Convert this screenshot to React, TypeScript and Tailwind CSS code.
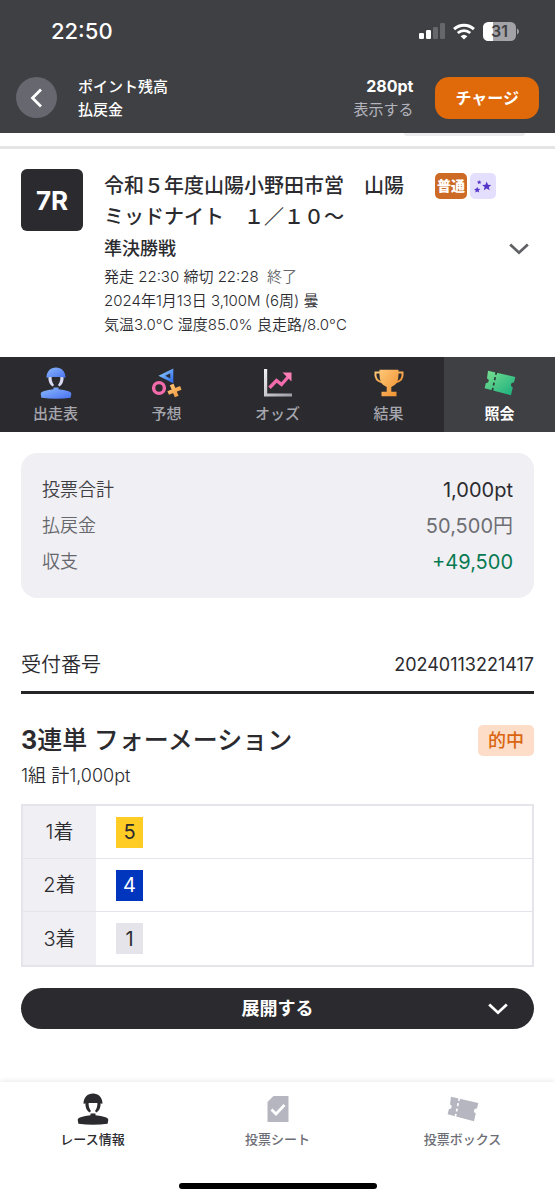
import type { ReactNode } from "react";

function BackIcon() {
  return (
    <svg width="20" height="20" viewBox="0 0 20 20" fill="none" aria-hidden="true">
      <path d="M14 1.500 5.500 10 14 18.500" stroke="#fff" strokeWidth="2.800" />
    </svg>
  );
}

function DownIcon({ color }: { color: string }) {
  return (
    <svg width="20" height="12" viewBox="0 0 20 12" fill="none" aria-hidden="true">
      <path d="M1.200 1.500 10 9.700 18.800 1.500" stroke={color} strokeWidth="2.800" />
    </svg>
  );
}

function StatusIcons() {
  return (
    <div className="flex items-center gap-2">
      <svg width="26" height="17" viewBox="0 0 26 17" aria-hidden="true">
        <rect x="0" y="10" width="5" height="6" rx="1.2" fill="#fff" />
        <rect x="7" y="7" width="5" height="9" rx="1.2" fill="#fff" />
        <rect x="14" y="4" width="5" height="12" rx="1.2" fill="#66676b" />
        <rect x="21" y="0" width="5" height="16" rx="1.2" fill="#66676b" />
      </svg>
      <svg width="22" height="17" viewBox="0 0 22 17" fill="none" stroke="#fff" aria-hidden="true">
        <path d="M1.100 6.200C6.600 .9 15.400 .9 20.900 6.200" strokeWidth="3" />
        <path d="M4.800 10C8.300 6.700 13.700 6.700 17.200 10" strokeWidth="2.800" />
        <path d="M11 16.600 7.600 13.200Q11 10.200 14.400 13.200Z" fill="#fff" stroke="none" />
      </svg>
      <svg width="36" height="19" viewBox="0 0 36 19" aria-hidden="true">
        <rect width="33" height="19" rx="5.5" fill="#a3a3a7" />
        <path d="M5.500 0H10V19H5.500A5.500 5.500 0 0 1 0 13.500V5.500A5.500 5.500 0 0 1 5.500 0Z" fill="#fff" />
        <path d="M34 6.500Q36 7.500 36 9.500T34 12.500Z" fill="#a3a3a7" />
        <text x="16.5" y="15" textAnchor="middle" fill="#3f4043" fontSize="16" fontWeight="600" fontFamily="Inter, sans-serif">
          31
        </text>
      </svg>
    </div>
  );
}

function RiderIcon({ fill, strap }: { fill: string; strap: string }) {
  return (
    <svg width="32" height="32" viewBox="0 0 32 32" aria-hidden="true">
      <defs>
        <linearGradient id="riderBlue" x1="0" y1="0" x2="1" y2="1">
          <stop offset="0" stopColor="#8bb9ff" />
          <stop offset="1" stopColor="#4a72ef" />
        </linearGradient>
      </defs>
      <path d="M8.400 9.500H11.600Q11.400 15 14 18L12.600 19.500Q8 16.500 8.400 9.500ZM23.600 9.500H20.400Q20.600 15 18 18L19.400 19.500Q24 16.500 23.600 9.500Z" fill={strap} />
      <path d="M6.500 10.800C6.500 4.500 10.500 .5 16 .5S25.500 4.500 25.500 10.800Q24 10.800 21.500 10H10.500Q8 10.800 6.500 10.800Z" fill={fill} />
      <path d="M13.500 20.500H18.500V22.300Q24 22.600 28.500 24.300Q31.500 25.300 31.300 27L30.600 30.800Q16 32.600 1.400 30.800L.7 27Q.5 25.300 3.500 24.300Q8 22.600 13.500 22.300Z" fill={fill} />
    </svg>
  );
}

function PredictionIcon() {
  return (
    <svg width="32" height="32" viewBox="0 0 32 32" fill="none" aria-hidden="true">
      <defs>
        <linearGradient id="triBlue" x1="0" y1="0" x2="1" y2="1">
          <stop offset="0" stopColor="#86c5ff" />
          <stop offset="1" stopColor="#3472f0" />
        </linearGradient>
        <linearGradient id="crossOrange" x1="0" y1="0" x2="1" y2="1">
          <stop offset="0" stopColor="#ffc97a" />
          <stop offset="1" stopColor="#f0963c" />
        </linearGradient>
      </defs>
      <path d="M10.800 8.800 20.800 4V13.800Z" stroke="url(#triBlue)" strokeWidth="3" />
      <circle cx="8" cy="21" r="5.400" stroke="#f26bab" strokeWidth="3.400" />
      <path d="M20.700 17.500 25.700 29.500M17.200 26 29.800 20.800" stroke="url(#crossOrange)" strokeWidth="4" />
    </svg>
  );
}

function OddsIcon() {
  return (
    <svg width="32" height="32" viewBox="0 0 32 32" fill="none" aria-hidden="true">
      <defs>
        <linearGradient id="axisGrey" x1="0" y1="0" x2="1" y2="1">
          <stop offset="0" stopColor="#f3f3f6" />
          <stop offset="1" stopColor="#9b9ba4" />
        </linearGradient>
      </defs>
      <path d="M2 2H5.200V26.500H30V29.500H2Z" fill="url(#axisGrey)" />
      <path d="M7.500 20.800 14.500 13.500 19.500 17.500 27 9" stroke="#f26bab" strokeWidth="3.400" />
      <path d="M20.500 5.500H29.500V14.500Z" fill="#fb7fb6" />
    </svg>
  );
}

function TrophyIcon() {
  return (
    <svg width="32" height="32" viewBox="0 0 32 32" aria-hidden="true">
      <defs>
        <linearGradient id="cupGold" x1="0" y1="0" x2="1" y2="1">
          <stop offset="0" stopColor="#ffc777" />
          <stop offset="1" stopColor="#ef8f2e" />
        </linearGradient>
      </defs>
      <path d="M7 5.500H2.500Q1.300 13.800 9.800 15.500M25 5.500H29.500Q30.700 13.800 22.200 15.500" fill="none" stroke="url(#cupGold)" strokeWidth="2" />
      <path d="M6.500 2.800H25.500V8Q25.500 17.500 18.300 20V24.800H23.500V29.200H8.500V24.800H13.700V20Q6.500 17.500 6.500 8Z" fill="url(#cupGold)" />
    </svg>
  );
}

function TicketIcon({ fill, line }: { fill: string; line: string }) {
  return (
    <svg width="32" height="32" viewBox="0 0 32 32" aria-hidden="true">
      <defs>
        <linearGradient id="ticketGreen" x1="0" y1="0" x2="1" y2="1">
          <stop offset="0" stopColor="#7be092" />
          <stop offset="1" stopColor="#17ad7c" />
        </linearGradient>
      </defs>
      <path d="M4 3.800 31.300 10 30 15.600A2.200 2.200 0 0 0 28.800 20.300L27 28.300 .6 21.300 1.900 15.900A2.200 2.200 0 0 0 3 11.500Z" fill={fill} />
      <path d="M12.400 4.800 8.200 24.500" stroke={line} strokeWidth="1.700" strokeDasharray="3 2.500" />
    </svg>
  );
}

function SheetIcon() {
  return (
    <svg width="32" height="32" viewBox="0 0 32 32" aria-hidden="true">
      <path d="M11.500 3H26.500V29H5.500V9Z" fill="#b5b6c0" />
      <path d="M9.500 16.500 14 21 22.500 12" fill="none" stroke="#fff" strokeWidth="2.800" />
    </svg>
  );
}

function StarsIcon() {
  const star = "M0-4.200 1.200-1.400 4.200-1.200 1.900.8 2.700 3.700 0 2.100-2.700 3.700-1.900.8-4.200-1.200-1.200-1.400Z";
  return (
    <svg width="26" height="26" viewBox="0 0 26 26" fill="#5535c9" aria-hidden="true">
      <path d={star} transform="translate(16.700 13.200) scale(1.100)" />
      <path d={star} transform="translate(7.200 16.800) scale(.75)" />
      <path d={star} transform="translate(9.200 9.200) scale(.55)" />
    </svg>
  );
}

const tabs: { label: string; icon: ReactNode }[] = [
  { label: "出走表", icon: <RiderIcon fill="url(#riderBlue)" strap="#d9daf2" /> },
  { label: "予想", icon: <PredictionIcon /> },
  { label: "オッズ", icon: <OddsIcon /> },
  { label: "結果", icon: <TrophyIcon /> },
  { label: "照会", icon: <TicketIcon fill="url(#ticketGreen)" line="#2d3a35" /> },
];

const summary = [
  { label: "投票合計", value: "1,000pt", labelColor: "text-[#3f4043]", valueColor: "text-[#2b2b2f]" },
  { label: "払戻金", value: "50,500円", labelColor: "text-[#66676c]", valueColor: "text-[#6d6e73]" },
  { label: "収支", value: "+49,500", labelColor: "text-[#66676c]", valueColor: "text-[#087a52]" },
];

const places = [
  { place: "1着", car: "5", chip: "bg-[#ffcc26] text-[#2b2b2f]" },
  { place: "2着", car: "4", chip: "bg-[#0035bd] text-white" },
  { place: "3着", car: "1", chip: "bg-[#e4e4ea] text-[#2b2b2f]" },
];

const navItems: { label: string; icon: ReactNode; color: string }[] = [
  { label: "レース情報", icon: <RiderIcon fill="#2b2b2f" strap="#2b2b2f" />, color: "text-[#2b2b2f]" },
  { label: "投票シート", icon: <SheetIcon />, color: "text-[#6d6e75]" },
  { label: "投票ボックス", icon: <TicketIcon fill="#b5b6c0" line="#fff" />, color: "text-[#6d6e75]" },
];

export default function App() {
  return (
    <div className="flex min-h-screen flex-col bg-white font-['Inter','Noto_Sans_CJK_JP',sans-serif] text-[#2b2b2f]">
      <header className="bg-[#3f4043] text-white">
        <div className="flex h-[62px] items-center justify-between pr-9 pl-[51px]">
          <span className="text-[22px] leading-7 font-medium">22:50</span>
          <StatusIcons />
        </div>
        <div className="flex h-[71px] items-center px-4">
          <button aria-label="戻る" className="flex size-[41px] items-center justify-center rounded-full bg-[#66676f]">
            <BackIcon />
          </button>
          <dl className="ml-[21px] grid flex-1 grid-cols-[1fr_auto] text-[15px] leading-[23px]">
            <dt className="font-medium">ポイント残高</dt>
            <dd className="text-right text-base leading-[23px] font-bold">280pt</dd>
            <dt className="font-medium">払戻金</dt>
            <dd className="text-right text-[#b3b4bd]">
              <button>表示する</button>
            </dd>
          </dl>
          <button className="ml-[22px] h-[42px] rounded-[14px] bg-[#e06a0a] px-5 text-base font-bold">チャージ</button>
        </div>
      </header>

      <div className="flex h-[13px] justify-end pr-[30px]">
        <div className="h-[3px] w-[121px] rounded-b-lg bg-[#ececef]" />
      </div>

      <section className="flex gap-[21px] border-t-[3px] border-[#e5e5e6] px-[21px] pt-5 pb-[20px]">
        <div className="flex size-[62px] shrink-0 items-center justify-center rounded-md bg-[#2b2b2f] text-[26px] font-bold text-white">
          7R
        </div>
        <div className="min-w-0 flex-1">
          <div className="flex items-start gap-[3px]">
            <h1 className="w-[328px] pt-[2px] text-xl leading-[31px] font-medium">
              令和５年度山陽小野田市営　山陽
              <br />
              ミッドナイト　１／１０〜
            </h1>
            <span className="mt-1 flex h-[26px] w-8 items-center justify-center rounded-[5px] bg-[#cc6a26] text-sm font-black whitespace-nowrap text-white">
              普通
            </span>
            <span className="mt-1 rounded-[5px] bg-[#e4dffd]">
              <StarsIcon />
            </span>
          </div>
          <div className="flex items-center justify-between pr-[5px]">
            <h2 className="text-lg leading-[32px] font-medium">準決勝戦</h2>
            <button aria-label="レース詳細を開く">
              <DownIcon color="#606165" />
            </button>
          </div>
          <div className="text-[15px] leading-[24px] font-[350]">
            <p>
              発走 22:30 締切 22:28 <span className="ml-1 text-[#66676c]">終了</span>
            </p>
            <p>2024年1月13日 3,100M (6周) 曇</p>
            <p>気温3.0°C 湿度85.0% 良走路/8.0°C</p>
          </div>
        </div>
      </section>

      <nav className="grid h-[75px] grid-cols-5 bg-[#2b2b2f]">
        {tabs.map((t, i) => (
          <a
            key={t.label}
            href="#"
            className={
              i === 4
                ? "flex flex-col items-center bg-[#3f4043] pt-[10px] text-[15px] leading-[29px] font-bold text-white"
                : "flex flex-col items-center pt-[10px] text-[15px] leading-[29px] font-medium text-[#a6a6ae]"
            }
          >
            {t.icon}
            {t.label}
          </a>
        ))}
      </nav>

      <main className="px-[21px] pt-[21px] pb-[53px]">
        <dl className="rounded-2xl bg-[#f0eff4] px-[21px] pt-[19px] pb-[18px]">
          {summary.map((r) => (
            <div key={r.label} className="flex h-9 items-center justify-between">
              <dt className={`text-lg font-[350] ${r.labelColor}`}>{r.label}</dt>
              <dd className={`text-xl ${r.valueColor}`}>{r.value}</dd>
            </div>
          ))}
        </dl>

        <div className="mt-[41px] flex h-[55px] items-center justify-between border-b-[3px] border-[#252528]">
          <span className="text-xl font-[350]">受付番号</span>
          <span className="text-lg">20240113221417</span>
        </div>

        <div className="mt-[28px] flex items-center justify-between">
          <h3 className="text-[25px] leading-[36px] font-medium">
            <span className="font-bold">3</span>連単 フォーメーション
          </h3>
          <span className="rounded-[5px] bg-[#fdddc8] px-[10px] text-lg leading-[31px] font-medium text-[#da6410]">的中</span>
        </div>
        <p className="text-lg leading-[36px] font-[350]">1組 計1,000pt</p>

        <table className="mt-[10px] w-full border-separate border-spacing-0 border-2 border-[#e4e4ea]">
          <tbody className="divide-y divide-[#e4e4ea]">
            {places.map((p, i) => (
              <tr key={p.place} className="h-[53px]">
                <th
                  scope="row"
                  className={
                    i < 2
                      ? "w-[73px] border-b border-[#e4e4ea] bg-[#f0eff4] text-xl font-[350]"
                      : "w-[73px] bg-[#f0eff4] text-xl font-[350]"
                  }
                >
                  {p.place}
                </th>
                <td className={i < 2 ? "border-b border-[#e4e4ea] pl-5" : "pl-5"}>
                  <span className={`flex h-[31px] w-[27px] items-center justify-center text-xl ${p.chip}`}>{p.car}</span>
                </td>
              </tr>
            ))}
          </tbody>
        </table>

        <button className="mt-[21px] grid h-[41px] w-full grid-cols-[1fr_auto_1fr] items-center rounded-full bg-[#2b2b2f] px-[26px] text-lg font-bold text-white">
          <span className="col-start-2">展開する</span>
          <span className="justify-self-end">
            <DownIcon color="#fff" />
          </span>
        </button>
      </main>

      <footer className="sticky bottom-0 mt-auto bg-white pb-[11px] shadow-[0_0_6px_rgba(0,0,0,0.12)]">
        <nav className="grid grid-cols-3 pt-[11px]">
          {navItems.map((n) => (
            <a key={n.label} href="#" className={`flex flex-col items-center text-[13px] leading-[28px] font-medium ${n.color}`}>
              {n.icon}
              {n.label}
            </a>
          ))}
        </nav>
        <div className="mx-auto mt-[30px] h-[6px] w-[198px] rounded-full bg-black" />
      </footer>
    </div>
  );
}
